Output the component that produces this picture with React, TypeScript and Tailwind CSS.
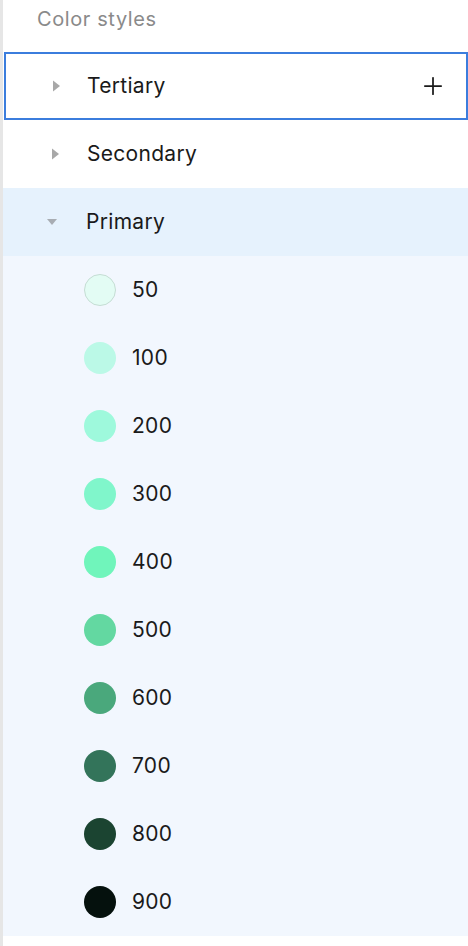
import { Plus } from "lucide-react";

const shades = [
  { name: "50", color: "#e3fcf4", ring: true },
  { name: "100", color: "#bbf9e7" },
  { name: "200", color: "#9ef9dc" },
  { name: "300", color: "#80f6cb" },
  { name: "400", color: "#70f5bb" },
  { name: "500", color: "#63d8a1" },
  { name: "600", color: "#4aa87c" },
  { name: "700", color: "#33745a" },
  { name: "800", color: "#1b4431" },
  { name: "900", color: "#05110d" },
];

function Caret({ open }: { open?: boolean }) {
  return (
    <svg width="12" height="12" viewBox="0 0 12 12" className="shrink-0">
      {open ? (
        <path d="M1 3 L11 3 L6 9 Z" fill="#a8adb3" />
      ) : (
        <path d="M2 0.5 L9 6 L2 11.5 Z" fill="#a8a8a8" />
      )}
    </svg>
  );
}

export default function App() {
  return (
    <div
      className="w-[468px] h-[946px] bg-white border-l-[3px] border-[#e6e6e6] overflow-hidden text-[#1a1a1a]"
      style={{ fontFamily: "Inter, 'Noto Sans', sans-serif" }}
    >
      <div className="h-[52px] pl-[34px] pt-[4px] text-[20px] tracking-[0.6px] text-[#8a8a8a]">
        Color styles
      </div>

      {/* groups */}
      <div className="ml-px h-[68px] flex items-center border-2 border-[#3b7ddd] pl-[45px] pr-[19px]">
        <Caret />
        <span className="ml-[24px] text-[21px] tracking-[0.3px]">Tertiary</span>
        <Plus className="ml-auto w-[28px] h-[28px] text-[#1a1a1a]" strokeWidth={1.5} />
      </div>
      <div className="h-[68px] flex items-center pl-[47px]">
        <Caret />
        <span className="ml-[25px] text-[21px] tracking-[0.3px]">Secondary</span>
      </div>
      <div className="h-[68px] flex items-center pl-[43px] bg-[#e6f2fd]">
        <Caret open />
        <span className="ml-[28px] text-[21px] tracking-[0.3px]">Primary</span>
      </div>

      <div className="bg-[#f2f7fe]">
        {shades.map((s) => (
          <div key={s.name} className="h-[68px] flex items-center pl-[81px]">
            <span
              className={`w-[32px] h-[32px] rounded-full ${s.ring ? "border border-[#c5ddd4]" : ""}`}
              style={{ backgroundColor: s.color }}
            />
            <span className="ml-[16px] text-[21px] tracking-[0.3px]">{s.name}</span>
          </div>
        ))}
      </div>
    </div>
  );
}
